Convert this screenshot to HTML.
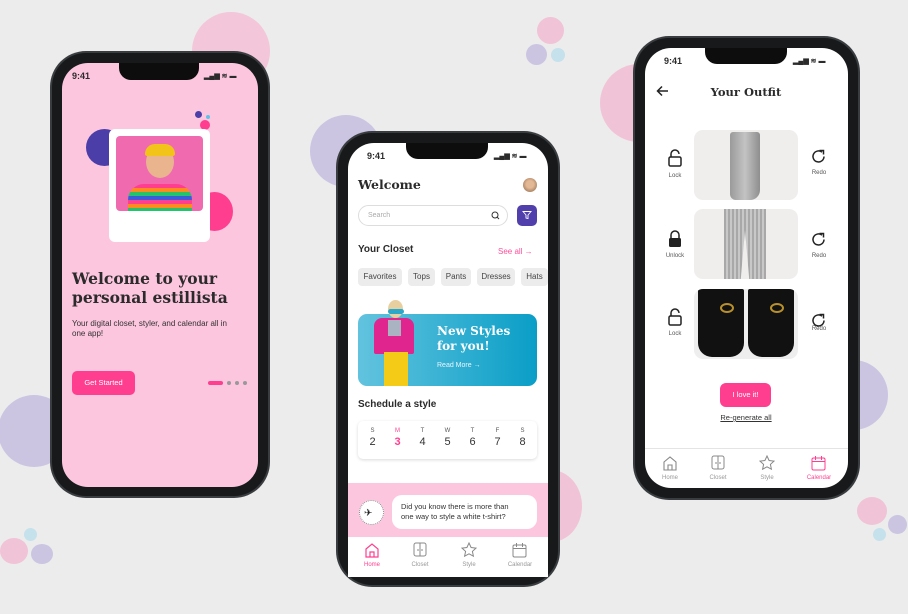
<!DOCTYPE html>
<html><head><meta charset="utf-8"><style>
*{margin:0;padding:0;box-sizing:border-box}
body{width:908px;height:614px;background:#ececec;position:relative;overflow:hidden;font-family:"Liberation Sans",sans-serif;color:#2b2b2b}
.a{position:absolute}
.c{position:absolute;border-radius:50%}
.phone{position:absolute;background:#17191a;border-radius:34px;box-shadow:0 0 0 2px #3a3d40}
.scr{position:absolute;overflow:hidden;border-radius:26px}
.notch{position:absolute;background:#0d0d0d;border-radius:0 0 12px 12px}
.serif{font-family:"DejaVu Serif",serif;font-weight:bold}
.t{font-size:9px;font-weight:bold}
.chip{position:absolute;top:268px;height:18px;background:#ececec;border-radius:4px;font-size:8px;line-height:18px;text-align:center;color:#444}
.nl{position:absolute;font-size:6px;color:#999;text-align:center;width:40px}
.img{position:absolute;background:#efeeed;border-radius:9px;left:694px;width:104px;height:70px;overflow:hidden}
.sl{position:absolute;font-size:6px;color:#555;text-align:center;width:30px}
</style></head><body>
<div class="c" style="left:192px;top:12px;width:78px;height:78px;background:#f3c6d9"></div>
<div class="c" style="left:-2px;top:395px;width:72px;height:72px;background:#cbc5e2"></div>
<div class="c" style="left:0;top:538px;width:28px;height:26px;background:#f1c3d6"></div>
<div class="c" style="left:31px;top:544px;width:22px;height:20px;background:#cbc5e2"></div>
<div class="c" style="left:24px;top:528px;width:13px;height:13px;background:#c5e1ec"></div>
<div class="c" style="left:537px;top:17px;width:27px;height:27px;background:#f1c3d6"></div>
<div class="c" style="left:526px;top:44px;width:21px;height:21px;background:#cbc5e2"></div>
<div class="c" style="left:551px;top:48px;width:14px;height:14px;background:#c5e1ec"></div>
<div class="c" style="left:310px;top:115px;width:72px;height:72px;background:#cbc5e2"></div>
<div class="c" style="left:600px;top:64px;width:78px;height:78px;background:#f1c3d6"></div>
<div class="c" style="left:520px;top:470px;width:62px;height:72px;background:#f1c3d6"></div>
<div class="c" style="left:818px;top:360px;width:70px;height:70px;background:#cbc5e2"></div>
<div class="c" style="left:857px;top:497px;width:30px;height:28px;background:#f1c3d6"></div>
<div class="c" style="left:888px;top:515px;width:19px;height:19px;background:#cbc5e2"></div>
<div class="c" style="left:873px;top:528px;width:13px;height:13px;background:#c5e1ec"></div>

<!-- PHONE 1 -->
<div class="phone" style="left:52px;top:53px;width:216px;height:443px"></div>
<div class="scr" style="left:62px;top:63px;width:196px;height:424px;background:#fcc6de"></div>
<div class="notch" style="left:119px;top:63px;width:80px;height:17px"></div>
<div class="a t" style="left:72px;top:71px">9:41</div>
<div class="a" style="left:204px;top:72px;font-size:7px;font-weight:bold">▂▄▆ ≋ ▬</div>
<div class="c" style="left:86px;top:129px;width:37px;height:37px;background:#4b3ea8"></div>
<div class="c" style="left:196px;top:192px;width:37px;height:39px;background:#ff3e8f"></div>
<div class="c" style="left:195px;top:111px;width:7px;height:7px;background:#4b3ea8"></div>
<div class="c" style="left:206px;top:115px;width:4px;height:4px;background:#5ec3e6"></div>
<div class="c" style="left:200px;top:120px;width:10px;height:10px;background:#ff3e8f"></div>
<div class="a" style="left:109px;top:129px;width:101px;height:113px;background:#fff;border-radius:6px"></div>
<div class="a" style="left:116px;top:136px;width:87px;height:75px;background:#f06ab0;border-radius:4px;overflow:hidden">
 <div class="c" style="left:30px;top:10px;width:28px;height:32px;background:#e9b48e"></div>
 <div class="a" style="left:29px;top:8px;width:30px;height:12px;background:#f2c41a;border-radius:14px 14px 3px 3px"></div>
 <div class="a" style="left:12px;top:48px;width:64px;height:30px;border-radius:16px 16px 0 0;background:repeating-linear-gradient(180deg,#ff3e8f 0 4px,#ff8a1f 4px 8px,#25c36b 8px 12px,#3b5bdb 12px 16px)"></div>
</div>
<div class="a serif" style="left:72px;top:269px;font-size:15.5px;line-height:19px;color:#2b2b2b">Welcome to your<br>personal estillista</div>
<div class="a" style="left:72px;top:319px;font-size:8px;line-height:10px;color:#333">Your digital closet, styler, and calendar all in<br>one app!</div>
<div class="a" style="left:72px;top:371px;width:63px;height:24px;background:#ff3e8f;border-radius:5px;color:#fff;font-size:7.5px;line-height:24px;text-align:center">Get Started</div>
<div class="a" style="left:208px;top:381px;width:15px;height:4px;background:#ff3e8f;border-radius:2px"></div>
<div class="c" style="left:227px;top:381px;width:4px;height:4px;background:#999"></div>
<div class="c" style="left:235px;top:381px;width:4px;height:4px;background:#999"></div>
<div class="c" style="left:243px;top:381px;width:4px;height:4px;background:#999"></div>

<!-- PHONE 2 -->
<div class="phone" style="left:338px;top:133px;width:220px;height:452px"></div>
<div class="scr" style="left:348px;top:143px;width:200px;height:434px;background:#fff"></div>
<div class="notch" style="left:406px;top:143px;width:82px;height:16px"></div>
<div class="a t" style="left:367px;top:151px">9:41</div>
<div class="a" style="left:494px;top:152px;font-size:7px;font-weight:bold">▂▄▆ ≋ ▬</div>
<div class="a serif" style="left:358px;top:177px;font-size:12.5px">Welcome</div>
<div class="c" style="left:523px;top:178px;width:14px;height:14px;background:radial-gradient(circle at 50% 45%,#e3b894 35%,#b08a6a 70%)"></div>
<div class="a" style="left:358px;top:205px;width:150px;height:21px;border:1px solid #ddd;border-radius:11px;font-size:7px;color:#aaa;line-height:19px;padding-left:9px">Search</div>
<svg class="a" style="left:491px;top:211px" width="9" height="9" viewBox="0 0 9 9"><circle cx="4" cy="4" r="3" fill="none" stroke="#333" stroke-width="1"/><path d="M6 6l2 2" stroke="#333"/></svg>
<div class="a" style="left:517px;top:205px;width:20px;height:21px;background:#5140ab;border-radius:5px"></div>
<svg class="a" style="left:522px;top:210px" width="10" height="10" viewBox="0 0 10 10"><path d="M1 1.5h8L6 5v3.5L4 8V5z" fill="none" stroke="#fff" stroke-width=".9"/></svg>
<div class="a" style="left:358px;top:244px;font-size:10px;font-weight:bold">Your Closet</div>
<div class="a" style="left:498px;top:247px;font-size:8px;color:#ff4f9a">See all →</div>
<div class="chip" style="left:358px;width:44px">Favorites</div>
<div class="chip" style="left:408px;width:27px">Tops</div>
<div class="chip" style="left:441px;width:30px">Pants</div>
<div class="chip" style="left:477px;width:38px">Dresses</div>
<div class="chip" style="left:521px;width:27px">Hats</div>
<div class="a" style="left:358px;top:314px;width:179px;height:72px;border-radius:9px;background:linear-gradient(90deg,#62c3de,#0a9ec7)"></div>
<div class="a" style="left:372px;top:300px;width:44px;height:86px">
 <div class="c" style="left:16px;top:0;width:15px;height:18px;background:#e8cfa0"></div>
 <div class="a" style="left:16px;top:9px;width:16px;height:5px;background:#2aa7c9;border-radius:3px"></div>
 <div class="a" style="left:2px;top:18px;width:40px;height:36px;background:#e0258f;border-radius:8px 8px 2px 2px"></div>
 <div class="a" style="left:16px;top:20px;width:13px;height:16px;background:#a9b3c2"></div>
 <div class="a" style="left:12px;top:52px;width:24px;height:34px;background:#f4cc17"></div>
</div>
<div class="a serif" style="left:437px;top:324px;font-size:12px;line-height:15px;color:#fff">New Styles<br>for you!</div>
<div class="a" style="left:437px;top:362px;font-size:7px;color:#e8f6fb">Read More →</div>
<div class="a" style="left:358px;top:399px;font-size:10px;font-weight:bold">Schedule a style</div>
<div class="a" style="left:358px;top:421px;width:179px;height:38px;border-radius:5px;box-shadow:0 1px 3px rgba(0,0,0,.15);background:#fff"></div>
<div class="a" style="left:360px;top:428px;width:175px;display:flex;justify-content:space-around;font-size:6px;color:#555;text-align:center">
 <span>S<br><b style="font-size:11px;font-weight:normal;line-height:17px;color:#333">2</b></span>
 <span style="color:#ff3e8f">M<br><b style="font-size:11px;line-height:17px">3</b></span>
 <span>T<br><b style="font-size:11px;font-weight:normal;line-height:17px;color:#333">4</b></span>
 <span>W<br><b style="font-size:11px;font-weight:normal;line-height:17px;color:#333">5</b></span>
 <span>T<br><b style="font-size:11px;font-weight:normal;line-height:17px;color:#333">6</b></span>
 <span>F<br><b style="font-size:11px;font-weight:normal;line-height:17px;color:#333">7</b></span>
 <span>S<br><b style="font-size:11px;font-weight:normal;line-height:17px;color:#333">8</b></span>
</div>
<div class="a" style="left:348px;top:483px;width:200px;height:54px;background:#fcc6de"></div>
<div class="c" style="left:359px;top:500px;width:25px;height:25px;background:#fff;border:1px dotted #888"></div>
<div class="a" style="left:364px;top:508px;font-size:10px;color:#222">✈</div>
<div class="a" style="left:392px;top:495px;width:145px;height:34px;background:#fff;border-radius:10px;font-size:7.5px;line-height:10px;padding:7px 0 0 9px;color:#333">Did you know there is more than<br>one way to style a white t-shirt?</div>
<div class="a" style="left:348px;top:537px;width:200px;height:40px;background:#fff"></div>
<svg class="a" style="left:364px;top:542px" width="16" height="16" viewBox="0 0 16 16"><path d="M2 7L8 2l6 5v8H2z M6 15v-5h4v5" fill="none" stroke="#ff3e8f" stroke-width="1.2"/></svg>
<svg class="a" style="left:413px;top:542px" width="14" height="16" viewBox="0 0 14 16"><rect x="1" y="1" width="12" height="13" rx="2" fill="none" stroke="#888"/><path d="M7 1v13M5 7v2M9 7v2" stroke="#888"/></svg>
<svg class="a" style="left:461px;top:542px" width="16" height="16" viewBox="0 0 16 16"><path d="M8 1l2.1 4.5 4.9.6-3.6 3.3 1 4.8L8 11.8 3.6 14.2l1-4.8L1 6.1l4.9-.6z" fill="none" stroke="#888"/></svg>
<svg class="a" style="left:512px;top:542px" width="15" height="16" viewBox="0 0 15 16"><rect x="1" y="3" width="13" height="12" rx="1.5" fill="none" stroke="#888"/><path d="M1 6.5h13M4.5 1v4M10.5 1v4" stroke="#888"/></svg>
<div class="nl" style="left:352px;top:562px;color:#ff3e8f">Home</div>
<div class="nl" style="left:400px;top:562px">Closet</div>
<div class="nl" style="left:449px;top:562px">Style</div>
<div class="nl" style="left:500px;top:562px">Calendar</div>

<!-- PHONE 3 -->
<div class="phone" style="left:635px;top:38px;width:223px;height:460px"></div>
<div class="scr" style="left:645px;top:48px;width:203px;height:440px;background:#fff"></div>
<div class="notch" style="left:705px;top:48px;width:82px;height:16px"></div>
<div class="a t" style="left:664px;top:56px">9:41</div>
<div class="a" style="left:793px;top:57px;font-size:7px;font-weight:bold">▂▄▆ ≋ ▬</div>
<svg class="a" style="left:656px;top:85px" width="13" height="12" viewBox="0 0 13 12"><path d="M12 6H1.5M6 1.5L1.5 6 6 10.5" fill="none" stroke="#222" stroke-width="1.5"/></svg>
<div class="a serif" style="left:686px;top:85px;width:120px;text-align:center;font-size:11.5px">Your Outfit</div>
<div class="img" style="top:130px"><div class="a" style="left:36px;top:2px;width:30px;height:68px;background:linear-gradient(90deg,#9a9a9a,#c3c3c3,#8e8e8e);border-radius:3px 3px 10px 6px"></div></div>
<div class="img" style="top:209px"><div class="a" style="left:30px;top:0;width:42px;height:70px;background:repeating-linear-gradient(90deg,#a8a8a8 0 2px,#c8c8c8 2px 4px);clip-path:polygon(0 0,100% 0,100% 100%,60% 100%,50% 30%,40% 100%,0 100%)"></div></div>
<div class="img" style="top:289px;background:#eeeeef"><div class="a" style="left:4px;top:0;width:46px;height:68px;background:#111;border-radius:2px 2px 14px 14px"></div><div class="a" style="left:54px;top:0;width:46px;height:68px;background:#111;border-radius:2px 2px 14px 14px"></div><div class="c" style="left:26px;top:14px;width:14px;height:10px;border:2px solid #b8902c"></div><div class="c" style="left:76px;top:14px;width:14px;height:10px;border:2px solid #b8902c"></div></div>
<svg class="a" style="left:668px;top:149px" width="14" height="18" viewBox="0 0 14 18"><path d="M3 8V5a4 4 0 0 1 8 0" fill="none" stroke="#222" stroke-width="1.5"/><rect x="1" y="8" width="12" height="9" rx="1.5" fill="none" stroke="#222" stroke-width="1.5"/></svg>
<svg class="a" style="left:668px;top:230px" width="14" height="18" viewBox="0 0 14 18"><path d="M3 8V5a4 4 0 0 1 8 0v3" fill="none" stroke="#222" stroke-width="1.5"/><rect x="1" y="8" width="12" height="9" rx="1.5" fill="#222"/></svg>
<svg class="a" style="left:668px;top:308px" width="14" height="18" viewBox="0 0 14 18"><path d="M3 8V5a4 4 0 0 1 8 0" fill="none" stroke="#222" stroke-width="1.5"/><rect x="1" y="8" width="12" height="9" rx="1.5" fill="none" stroke="#222" stroke-width="1.5"/></svg>
<div class="sl" style="left:660px;top:173px">Lock</div>
<div class="sl" style="left:660px;top:253px">Unlock</div>
<div class="sl" style="left:660px;top:331px">Lock</div>
<svg class="a" style="left:811px;top:149px" width="15" height="15" viewBox="0 0 15 15"><path d="M13 7.5A5.5 5.5 0 1 1 11 3.2" fill="none" stroke="#222" stroke-width="1.5"/><path d="M8.5 1.5h4v4" fill="none" stroke="#222" stroke-width="1.5"/></svg>
<svg class="a" style="left:811px;top:232px" width="15" height="15" viewBox="0 0 15 15"><path d="M13 7.5A5.5 5.5 0 1 1 11 3.2" fill="none" stroke="#222" stroke-width="1.5"/><path d="M8.5 1.5h4v4" fill="none" stroke="#222" stroke-width="1.5"/></svg>
<svg class="a" style="left:811px;top:313px" width="15" height="15" viewBox="0 0 15 15"><path d="M13 7.5A5.5 5.5 0 1 1 11 3.2" fill="none" stroke="#222" stroke-width="1.5"/><path d="M8.5 1.5h4v4" fill="none" stroke="#222" stroke-width="1.5"/></svg>
<div class="sl" style="left:804px;top:170px">Redo</div>
<div class="sl" style="left:804px;top:253px">Redo</div>
<div class="sl" style="left:804px;top:326px">Redo</div>
<div class="a" style="left:720px;top:383px;width:51px;height:24px;background:#ff3e8f;border-radius:6px;color:#fff;font-size:7.5px;line-height:24px;text-align:center">I love it!</div>
<div class="a" style="left:706px;top:413px;width:80px;text-align:center;font-size:7.5px;text-decoration:underline;color:#333">Re-generate all</div>
<div class="a" style="left:645px;top:448px;width:203px;height:1px;background:#e4e4e4"></div>
<svg class="a" style="left:662px;top:455px" width="16" height="16" viewBox="0 0 16 16"><path d="M2 7L8 2l6 5v8H2z M6 15v-5h4v5" fill="none" stroke="#888" stroke-width="1.1"/></svg>
<svg class="a" style="left:711px;top:455px" width="14" height="16" viewBox="0 0 14 16"><rect x="1" y="1" width="12" height="13" rx="2" fill="none" stroke="#888"/><path d="M7 1v13M5 7v2M9 7v2" stroke="#888"/></svg>
<svg class="a" style="left:759px;top:455px" width="16" height="16" viewBox="0 0 16 16"><path d="M8 1l2.1 4.5 4.9.6-3.6 3.3 1 4.8L8 11.8 3.6 14.2l1-4.8L1 6.1l4.9-.6z" fill="none" stroke="#888"/></svg>
<svg class="a" style="left:811px;top:455px" width="15" height="16" viewBox="0 0 15 16"><rect x="1" y="3" width="13" height="12" rx="1.5" fill="none" stroke="#ff3e8f"/><path d="M1 6.5h13M4.5 1v4M10.5 1v4" stroke="#ff3e8f"/></svg>
<div class="nl" style="left:650px;top:475px">Home</div>
<div class="nl" style="left:698px;top:475px">Closet</div>
<div class="nl" style="left:747px;top:475px">Style</div>
<div class="nl" style="left:799px;top:475px;color:#ff3e8f">Calendar</div>
</body></html>
